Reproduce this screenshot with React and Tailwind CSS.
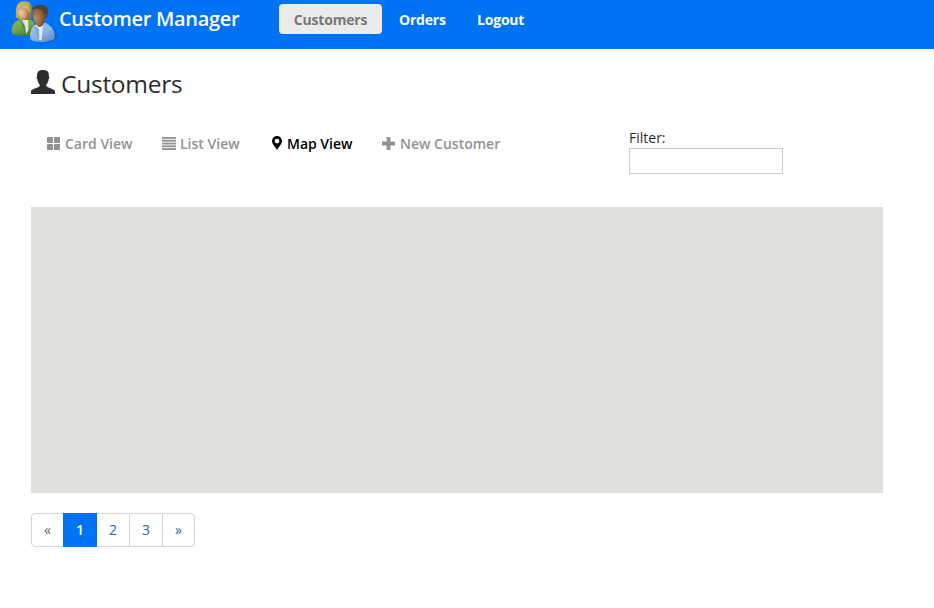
function CustomersLogo() {
  return (
    <svg className="block h-[44px] w-[48px] shrink-0" viewBox="0 0 48 44" aria-hidden="true">
      <defs>
        <linearGradient id="hair" x1="0" y1="0" x2="1" y2="1">
          <stop offset="0" stopColor="#cbbd72" />
          <stop offset="0.5" stopColor="#b7a24f" />
          <stop offset="1" stopColor="#806426" />
        </linearGradient>
        <radialGradient id="paleFace" cx="0.3" cy="0.45" r="0.75">
          <stop offset="0" stopColor="#f3d0aa" />
          <stop offset="0.6" stopColor="#cf9c70" />
          <stop offset="1" stopColor="#9a6a42" />
        </radialGradient>
        <radialGradient id="darkFace" cx="0.25" cy="0.5" r="0.8">
          <stop offset="0" stopColor="#bd8a5e" />
          <stop offset="0.55" stopColor="#8f603a" />
          <stop offset="1" stopColor="#60391f" />
        </radialGradient>
        <linearGradient id="green" x1="0" y1="0" x2="0.5" y2="1">
          <stop offset="0" stopColor="#8fb860" />
          <stop offset="0.6" stopColor="#76a84a" />
          <stop offset="1" stopColor="#4c8030" />
        </linearGradient>
        <linearGradient id="blue" x1="0" y1="0" x2="0.7" y2="1">
          <stop offset="0" stopColor="#a9c9ee" />
          <stop offset="0.6" stopColor="#8db3e3" />
          <stop offset="1" stopColor="#648fcb" />
        </linearGradient>
        <radialGradient id="shade">
          <stop offset="0.6" stopColor="#0b469c" stopOpacity="0.8" />
          <stop offset="1" stopColor="#0b469c" stopOpacity="0" />
        </radialGradient>
      </defs>
      <ellipse cx="36" cy="36" rx="11.500" ry="7" fill="url(#shade)" />
      <path d="M1 33.500C-0.200 26 3 22 8 20L11 18H17L23 22V34C17 36.500 5 36.500 1 33.500Z" fill="url(#green)" />
      <path d="M11 19.500L17 18.500L17.500 30L15 34Z" fill="#e1e4d8" />
      <path d="M10 19L14 26L15 34L11.500 27Z" fill="#5a8a37" />
      <path d="M5 17.500C5 12 3.500 1.500 13 1.200C20.500 1 21.500 6 20.500 12L20.500 19C18 20.800 9 20.500 5 17.500Z" fill="url(#hair)" />
      <path d="M6.800 8.500C8.500 6.500 11 7.500 14 8C17 8.500 17.500 10 17.500 13C17.500 17 15.500 20 12.500 20C8.500 19.500 6.500 14 6.800 8.500Z" fill="url(#paleFace)" />
      <path d="M5.500 9C7 4.500 13 3 18 7L19 13C17 11 17 9 14.500 8.300C11 7.300 8 6.300 6.500 9Z" fill="#cbb968" />
      <path d="M19.500 39.500C18 34 20 28 24 24.500L27 23H35C40 26 44 30 44 38.500C39 42.500 26 43.500 19.500 39.500Z" fill="url(#blue)" />
      <path d="M24.500 25L28.500 26.500L32 25.500L30.500 40H27.500Z" fill="#e2ebf7" />
      <path d="M23.500 25L28 29L28.500 40.500L24 34Z" fill="#87acdc" />
      <path d="M21.500 10C22 6.200 26 4.500 30 4.700C36.500 5 38.500 9.500 36.500 15L34.500 18.500L32 12L22 11Z" fill="#49443e" />
      <path d="M21.700 10C24 8.300 28 8.500 31 10C32.500 11 32.500 13.500 33 15C34.500 13 36.300 14.500 35.600 16.800C35 18.500 34 18.700 33.500 19C34 22.500 32 26.500 28.500 27C24 26 21 18 21.700 10Z" fill="url(#darkFace)" />
    </svg>
  );
}

function UserIcon() {
  return (
    <svg className="block h-[24px] w-[24px] shrink-0" viewBox="0 0 24 24" fill="#2d2d2d" aria-hidden="true">
      <path d="M0 24V21.500C0 19.800 3.500 18.800 7 17.300C9 16.300 9.300 15.500 8.500 14.500C7.200 13 6.500 10.800 6.300 9C5.400 8.500 5.500 6.800 6.100 6.500C5.900 2 7.500 0 12 0S18.100 2 17.900 6.500C18.500 6.800 18.600 8.500 17.700 9C17.500 10.800 16.800 13 15.500 14.500C14.700 15.500 15 16.300 17 17.300C20.500 18.800 24 19.800 24 21.500V24Z" />
    </svg>
  );
}

function CardIcon() {
  return (
    <svg className="-mt-px block h-[13px] w-[13px] shrink-0" viewBox="0 0 13 13" fill="currentColor" aria-hidden="true">
      <rect width="6" height="6" rx="0.600" />
      <rect x="7" width="6" height="6" rx="0.600" />
      <rect y="7" width="6" height="6" rx="0.600" />
      <rect x="7" y="7" width="6" height="6" rx="0.600" />
    </svg>
  );
}

function ListIcon() {
  return (
    <svg className="-mt-px block h-[13px] w-[14px] shrink-0" viewBox="0 0 14 13" fill="currentColor" aria-hidden="true">
      <rect width="14" height="1.850" />
      <rect y="2.800" width="14" height="1.850" />
      <rect y="5.600" width="14" height="1.850" />
      <rect y="8.400" width="14" height="1.850" />
      <rect y="11.150" width="14" height="1.850" />
    </svg>
  );
}

function PinIcon() {
  return (
    <svg className="-mt-[2px] block h-[14px] w-[10px] shrink-0" viewBox="0 0 10 14" fill="currentColor" aria-hidden="true">
      <path fillRule="evenodd" d="M5 0A5 5 0 0 0 0 5C0 7.500 2.500 10 5 14C7.500 10 10 7.500 10 5A5 5 0 0 0 5 0ZM5 2.700A2.400 2.400 0 1 1 5 7.500A2.400 2.400 0 1 1 5 2.700Z" />
    </svg>
  );
}

function PlusIcon() {
  return (
    <svg className="-mt-px block h-[13px] w-[13px] shrink-0" viewBox="0 0 13 13" fill="currentColor" aria-hidden="true">
      <path d="M4.600 0H8.400V4.600H13V8.400H8.400V13H4.600V8.400H0V4.600H4.600Z" />
    </svg>
  );
}

export default function App() {
  return (
    <div className="h-[608px] w-[934px] overflow-hidden bg-white font-['Open_Sans',sans-serif] text-[14px] leading-[20px] text-[#2d2d2d]">
      <header className="flex h-[49px] items-start bg-[#0073f5] text-white">
        <a className="ml-[11px] flex w-[268px]">
          <CustomersLogo />
          <span className="pt-[5px] text-[20px] leading-[28px] font-semibold tracking-[-0.31px] whitespace-nowrap">Customer Manager</span>
        </a>
        <nav className="flex pt-[4px] font-bold tracking-[-0.2px]">
          <a className="flex h-[30px] w-[103px] items-center justify-center rounded-[4px] bg-[#ebebeb] pt-[2px] text-[#777777]">Customers</a>
          <a className="ml-[17px] flex h-[30px] w-[78px] items-center pt-[2px]">Orders</a>
          <a className="flex h-[30px] items-center pt-[2px]">Logout</a>
        </nav>
      </header>

      <main className="pl-[31px]">
        <h1 className="flex h-[70px] pt-[21px] text-[24.5px] leading-[28px]">
          <UserIcon />
          <span className="ml-[6px] tracking-[-0.25px]">Customers</span>
        </h1>

        <div className="flex h-[88px]">
          <nav className="flex w-[598px] pt-[15px] pl-[16px] font-semibold whitespace-nowrap text-[#929292]">
            <a className="flex h-[20px] w-[115px] items-center gap-[5px]"><CardIcon />Card View</a>
            <a className="flex h-[20px] w-[110px] items-center gap-[4px]"><ListIcon />List View</a>
            <a className="flex h-[20px] w-[110px] items-center gap-[5px] text-black"><PinIcon />Map View</a>
            <a className="flex h-[20px] items-center gap-[5px]"><PlusIcon />New Customer</a>
          </nav>
          <label className="flex flex-col pt-[9px]">
            <span>Filter:</span>
            <input type="text" className="block h-[26px] w-[154px] border border-[#cccccc] bg-white px-[4px] outline-none" />
          </label>
        </div>

        <div className="h-[286px] w-[852px] bg-[#e0dfda]" />

        <nav className="mt-[20px] flex h-[34px] w-[164px] rounded-[4px] border border-[#d5d5d5] text-[#2a63a8]">
          <a className="flex w-[31px] items-center justify-center text-[#666666]">«</a>
          <a className="-my-px flex w-[34px] items-center justify-center bg-[#0073f5] font-semibold text-white">1</a>
          <a className="flex w-[33px] items-center justify-center border-r border-[#d5d5d5]">2</a>
          <a className="flex w-[33px] items-center justify-center border-r border-[#d5d5d5]">3</a>
          <a className="flex w-[31px] items-center justify-center">»</a>
        </nav>
      </main>
    </div>
  );
}
